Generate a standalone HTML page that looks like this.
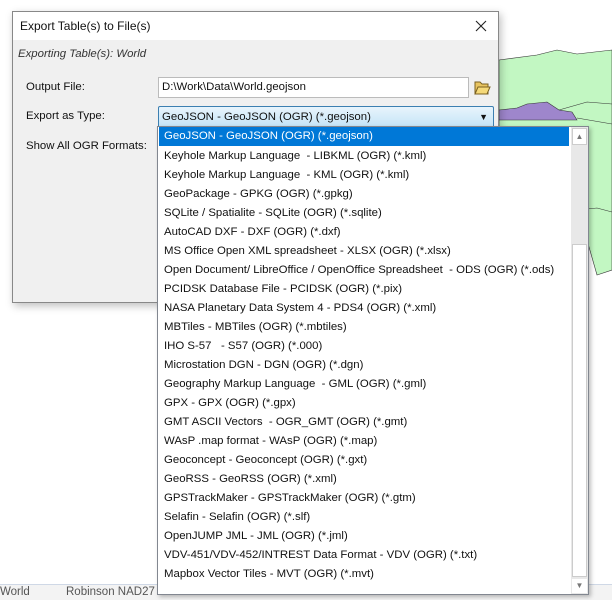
<!DOCTYPE html>
<html><head><style>
body{margin:0;width:612px;height:599px;overflow:hidden;background:#fff;font-family:"Liberation Sans",sans-serif;font-size:11.4px;color:#111;position:relative}
.abs{position:absolute}
.dlg{left:12px;top:11px;width:485px;height:290px;background:#f0f0f0;border:1px solid #888;box-shadow:2px 3px 8px rgba(0,0,0,.25)}
.title{left:0;top:0;width:485px;height:28px;background:#fff}
.list{left:157px;top:126px;width:430px;height:467px;background:#fff;border:1px solid #828790;box-shadow:2px 2px 4px rgba(0,0,0,.25)}
.item{position:absolute;left:1px;height:19px;line-height:19px;padding-left:5px;width:405px;white-space:nowrap}
.sb{position:absolute;left:413px;top:0;width:17px;height:467px;background:#e8e8e8}
</style></head><body>
<svg class="abs" style="left:497px;top:40px" width="115" height="240">
<path d="M2 20 L40 15 L60 10 L80 14 L115 10 L115 230 L100 235 L90 200 L78 180 L80 160 L60 150 L40 130 L20 100 L2 95 Z" fill="#c2f7c2" stroke="#333" stroke-width="0.6"/>
<path d="M2 70 L20 68 L30 64 L50 62 L62 70 L75 72 L80 80 L2 80 Z" fill="#9e86cc" stroke="#333" stroke-width="0.6"/>
<path d="M62 70 L90 62 L115 64 M80 78 L115 84 M80 170 L100 168 L115 172" stroke="#333" fill="none" stroke-width="0.6"/>
</svg>
<div class="abs" style="left:0;top:584px;width:612px;height:15px;background:#f3f3f3;border-top:1px solid #cfd8e6;color:#555;font-size:11.5px;line-height:15px"><span style="margin-left:0">World</span><span style="position:absolute;left:66px">Robinson NAD27</span></div>
<div class="abs dlg">
<div class="abs title"><span class="abs" style="left:7px;top:7px;font-size:12px">Export Table(s) to File(s)</span>
<svg class="abs" style="left:462px;top:8px" width="12" height="12"><path d="M1 1L11 11M11 1L1 11" stroke="#222" stroke-width="1.1"/></svg></div>
<div class="abs" style="left:5px;top:36px;font-style:italic;color:#333">Exporting Table(s): World</div>
<div class="abs" style="left:13px;top:69px">Output File:</div>
<div class="abs" style="left:13px;top:98px">Export as Type:</div>
<div class="abs" style="left:13px;top:128px">Show All OGR Formats:</div>
<div class="abs" style="left:145px;top:65px;width:306px;height:19px;background:#fff;border:1px solid #bbb;line-height:19px;padding-left:3px">D:\Work\Data\World.geojson</div>
<svg class="abs" style="left:460px;top:66px" width="18" height="18"><path d="M2 4h5l2 2h6v10H2z" fill="#e8c460" stroke="#7a6020"/><path d="M2 16l3-7h12l-3 7z" fill="#f5d979" stroke="#7a6020"/></svg>
<div class="abs" style="left:145px;top:94px;width:331px;height:20px;border:1px solid #3c7fb1;border-radius:2px;background:linear-gradient(#e8f4fc,#c4e4f7);line-height:20px;padding-left:3px">GeoJSON - GeoJSON (OGR) (*.geojson)<span class="abs" style="right:5px;top:0;font-size:9px">▼</span></div>
</div>
<div class="abs list">
<div class="item" style="top:0;background:#0078d7;color:#fff">GeoJSON - GeoJSON (OGR) (*.geojson)</div>
<div class="item" style="top:20px">Keyhole Markup Language &nbsp;- LIBKML (OGR) (*.kml)</div>
<div class="item" style="top:39px">Keyhole Markup Language &nbsp;- KML (OGR) (*.kml)</div>
<div class="item" style="top:58px">GeoPackage - GPKG (OGR) (*.gpkg)</div>
<div class="item" style="top:77px">SQLite / Spatialite - SQLite (OGR) (*.sqlite)</div>
<div class="item" style="top:96px">AutoCAD DXF - DXF (OGR) (*.dxf)</div>
<div class="item" style="top:115px">MS Office Open XML spreadsheet - XLSX (OGR) (*.xlsx)</div>
<div class="item" style="top:134px">Open Document/ LibreOffice / OpenOffice Spreadsheet &nbsp;- ODS (OGR) (*.ods)</div>
<div class="item" style="top:153px">PCIDSK Database File - PCIDSK (OGR) (*.pix)</div>
<div class="item" style="top:172px">NASA Planetary Data System 4 - PDS4 (OGR) (*.xml)</div>
<div class="item" style="top:191px">MBTiles - MBTiles (OGR) (*.mbtiles)</div>
<div class="item" style="top:210px">IHO S-57 &nbsp;&nbsp;- S57 (OGR) (*.000)</div>
<div class="item" style="top:229px">Microstation DGN - DGN (OGR) (*.dgn)</div>
<div class="item" style="top:248px">Geography Markup Language &nbsp;- GML (OGR) (*.gml)</div>
<div class="item" style="top:267px">GPX - GPX (OGR) (*.gpx)</div>
<div class="item" style="top:286px">GMT ASCII Vectors &nbsp;- OGR_GMT (OGR) (*.gmt)</div>
<div class="item" style="top:305px">WAsP .map format - WAsP (OGR) (*.map)</div>
<div class="item" style="top:324px">Geoconcept - Geoconcept (OGR) (*.gxt)</div>
<div class="item" style="top:343px">GeoRSS - GeoRSS (OGR) (*.xml)</div>
<div class="item" style="top:362px">GPSTrackMaker - GPSTrackMaker (OGR) (*.gtm)</div>
<div class="item" style="top:381px">Selafin - Selafin (OGR) (*.slf)</div>
<div class="item" style="top:400px">OpenJUMP JML - JML (OGR) (*.jml)</div>
<div class="item" style="top:419px">VDV-451/VDV-452/INTREST Data Format - VDV (OGR) (*.txt)</div>
<div class="item" style="top:438px">Mapbox Vector Tiles - MVT (OGR) (*.mvt)</div>
<div class="sb">
<div class="abs" style="left:1px;top:1px;width:15px;height:17px;background:#fff;border:1px solid #ccc;box-sizing:border-box;font-size:8px;text-align:center;line-height:15px;color:#777">▲</div>
<div class="abs" style="left:1px;top:117px;width:15px;height:333px;background:#fff;border:1px solid #ccc;box-sizing:border-box"></div>
<div class="abs" style="left:1px;top:452px;width:15px;height:14px;background:#fff;font-size:8px;text-align:center;line-height:14px;color:#777">▼</div>
</div>
</div>
</body></html>
